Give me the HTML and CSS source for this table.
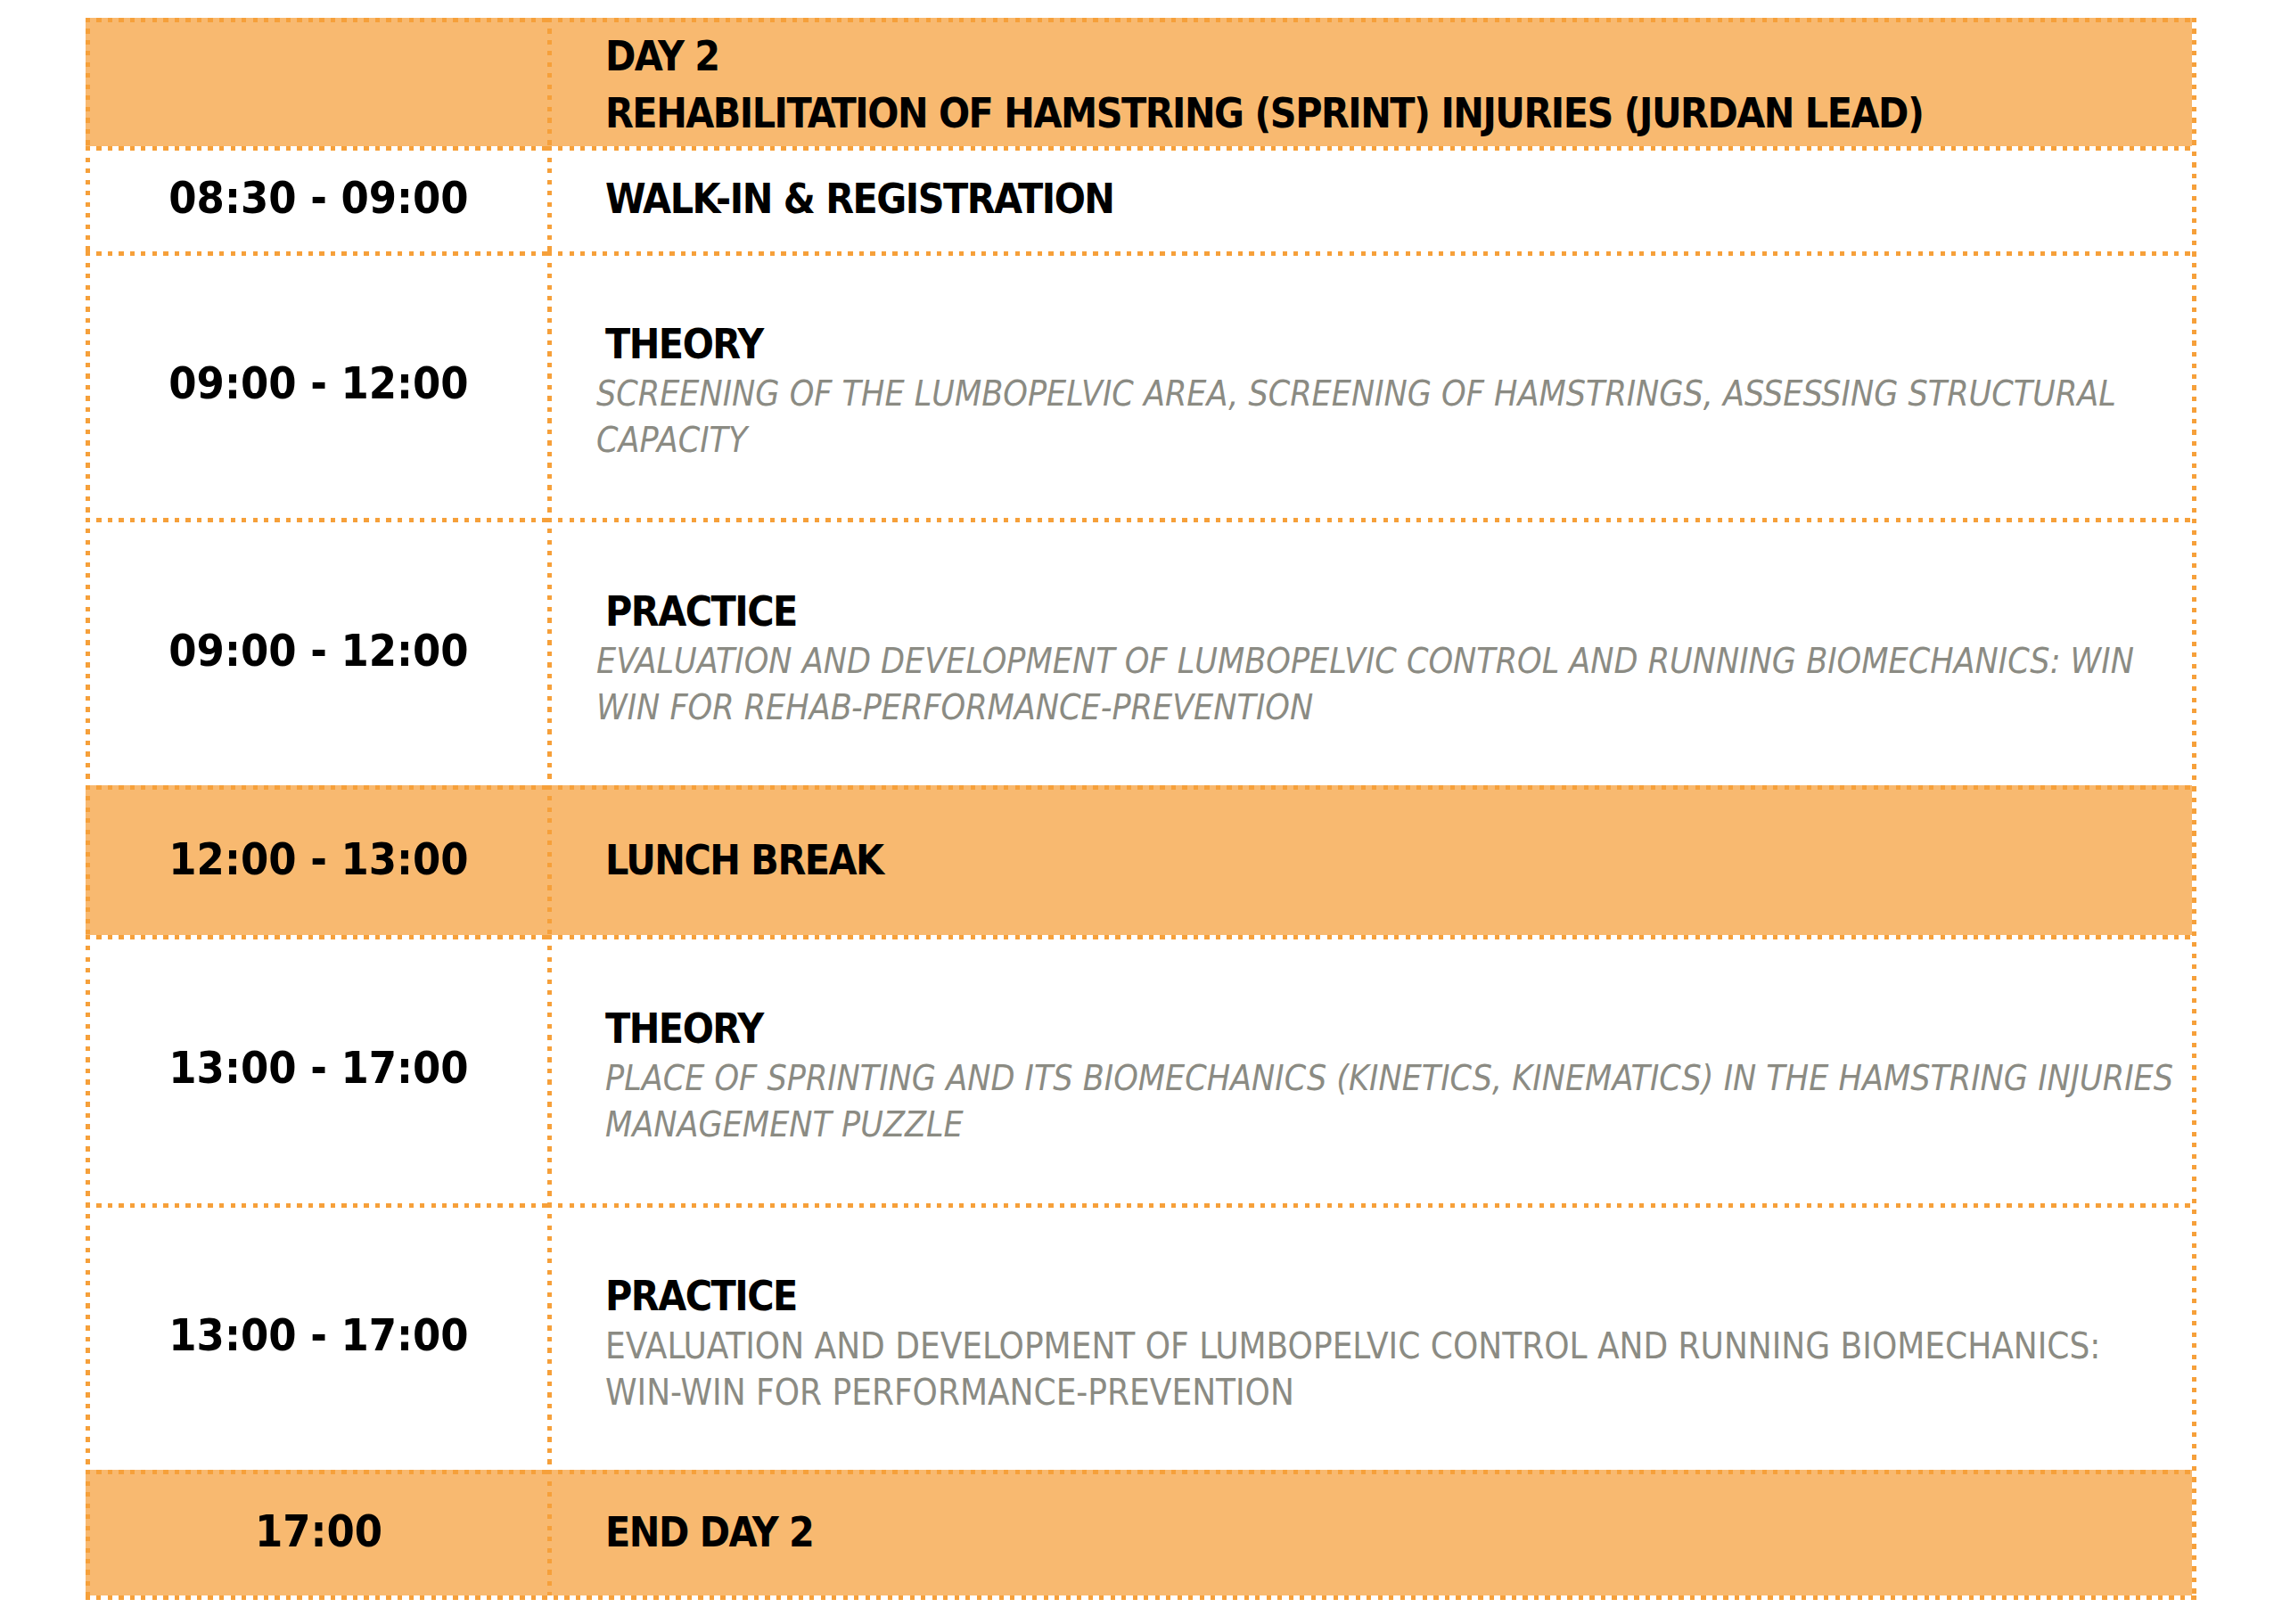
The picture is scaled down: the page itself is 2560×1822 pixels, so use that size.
FILE: index.html
```html
<!DOCTYPE html>
<html lang="en">
<head>
<meta charset="utf-8">
<title>Day 2 – Rehabilitation of Hamstring (Sprint) Injuries</title>
<link rel="stylesheet" href="styles.css">
</head>
<body>
<div class="schedule">
  <div class="cell time hl"></div>
  <div class="cell body hl head">
    <div class="title">DAY 2</div>
    <div class="title">REHABILITATION OF HAMSTRING (SPRINT) INJURIES (JURDAN LEAD)</div>
  </div>

  <div class="cell time">08:30 - 09:00</div>
  <div class="cell body single"><div class="title">WALK-IN &amp; REGISTRATION</div></div>

  <div class="cell time">09:00 - 12:00</div>
  <div class="cell body session">
    <div class="title">THEORY</div>
    <div class="desc italic shift">SCREENING OF THE LUMBOPELVIC AREA, SCREENING OF HAMSTRINGS, ASSESSING STRUCTURAL CAPACITY</div>
  </div>

  <div class="cell time">09:00 - 12:00</div>
  <div class="cell body session">
    <div class="title">PRACTICE</div>
    <div class="desc italic shift">EVALUATION AND DEVELOPMENT OF LUMBOPELVIC CONTROL AND RUNNING BIOMECHANICS: WIN WIN FOR REHAB-PERFORMANCE-PREVENTION</div>
  </div>

  <div class="cell time hl">12:00 - 13:00</div>
  <div class="cell body single hl"><div class="title">LUNCH BREAK</div></div>

  <div class="cell time">13:00 - 17:00</div>
  <div class="cell body session">
    <div class="title">THEORY</div>
    <div class="desc italic">PLACE OF SPRINTING AND ITS BIOMECHANICS (KINETICS, KINEMATICS) IN THE HAMSTRING INJURIES MANAGEMENT PUZZLE</div>
  </div>

  <div class="cell time">13:00 - 17:00</div>
  <div class="cell body session">
    <div class="title">PRACTICE</div>
    <div class="desc">EVALUATION AND DEVELOPMENT OF LUMBOPELVIC CONTROL AND RUNNING BIOMECHANICS: WIN-WIN FOR PERFORMANCE-PREVENTION</div>
  </div>

  <div class="cell time hl">17:00</div>
  <div class="cell body single hl"><div class="title">END DAY 2</div></div>
</div>
</body>
</html>
```
FILE: styles.css
```css
:root {
  --dot: #f6a03a;
  --fill: #f8b970;
  --grey: #8b8b83;
}

html, body {
  margin: 0;
  padding: 0;
  background: #ffffff;
}

body {
  font-family: "DejaVu Sans Condensed", "DejaVu Sans", sans-serif;
  color: #000;
}

.schedule {
  box-sizing: border-box;
  width: 2368px;
  margin: 20px 0 0 96px;
  padding: 0 5px 5px 0;
  display: grid;
  grid-template-columns: 518px 1fr;
  grid-template-rows: 144px 118px 299px 300px 168px 301px 299px 141px;
  background:
    repeating-linear-gradient(90deg, var(--dot) 0 5px, transparent 5px 12.5px) left bottom / 100% 5px no-repeat,
    repeating-linear-gradient(180deg, var(--dot) 0 5px, transparent 5px 12.5px) right top / 5px 100% no-repeat;
}

.cell {
  box-sizing: border-box;
  display: flex;
  flex-direction: column;
  justify-content: center;
  padding-top: 5px;
  padding-left: 5px;
  background:
    repeating-linear-gradient(90deg, var(--dot) 0 5px, transparent 5px 12.5px) left top / 100% 5px no-repeat,
    repeating-linear-gradient(180deg, var(--dot) 0 5px, transparent 5px 12.5px) left top / 5px 100% no-repeat;
}

.hl {
  background-color: var(--fill);
}

.time {
  align-items: center;
  padding-bottom: 8px;
  font-weight: bold;
  font-size: 50px;
  line-height: 60px;
}

.body {
  padding-left: 65px;
  padding-right: 6px;
}

.single {
  padding-bottom: 6px;
}

.head .title {
  line-height: 64px;
}

.session {
  padding-top: 13px;
}

.title {
  font-weight: bold;
  font-size: 46px;
  letter-spacing: -1.5px;
  line-height: 60px;
}

.desc {
  color: var(--grey);
  font-size: 40px;
  line-height: 52px;
}

.italic {
  font-size: 39px;
  font-style: italic;
}

.shift {
  margin-left: -10px;
}
```
